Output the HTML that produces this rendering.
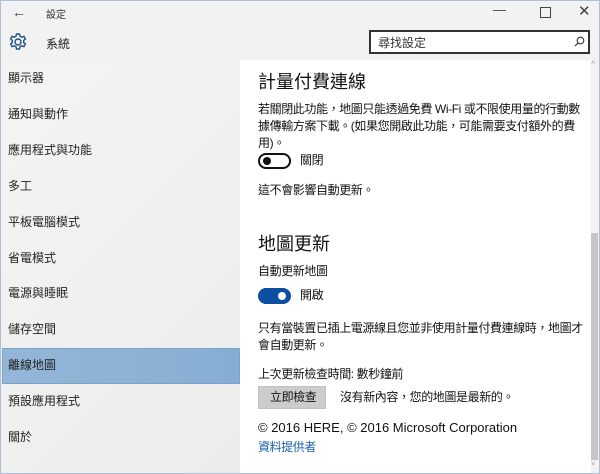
<!DOCTYPE html>
<html><head><meta charset="utf-8"><style>
*{margin:0;padding:0;box-sizing:border-box}
body{width:600px;height:474px;overflow:hidden;background:#f2f2f2;font-family:"Liberation Sans","Noto Sans CJK TC",sans-serif;color:#000;position:relative}
.abs{position:absolute;white-space:nowrap}
#frame{position:absolute;left:0;top:0;width:600px;height:474px;border:1px solid #a9c0d8;pointer-events:none}
#side{position:absolute;left:1px;top:60px;width:239px;height:413px;background:linear-gradient(135deg,#f4f4f4,#ececec)}
.it{position:absolute;left:8px;font-size:12px;color:#222;line-height:14px}
#sel{position:absolute;left:2px;top:348px;width:238px;height:36px;background:linear-gradient(90deg,#94b6d8,#86aed3);border:1px solid #7aa3cc}
#content{position:absolute;left:240px;top:60px;width:359px;height:413px;background:#fff}
.t{font-size:12px;letter-spacing:-0.4px;color:#111;line-height:17px}
.h{font-size:18px;color:#111}
</style></head><body>
<div class="abs" style="left:12px;top:4px;font-size:14px;color:#333">&#8592;</div>
<div class="abs" style="left:46px;top:6px;font-size:10px;color:#333">設定</div>
<div class="abs" style="left:493px;top:2px;font-size:13px;color:#444">&#8212;</div>
<div class="abs" style="left:540px;top:7px;width:11px;height:11px;border:1px solid #444"></div>
<div class="abs" style="left:578px;top:2px;font-size:15px;color:#444">&#10005;</div>
<svg class="abs" style="left:8px;top:32px" width="20" height="20" viewBox="0 0 20 20"><g fill="none" stroke="#1c4f8a" stroke-width="1.4"><circle cx="10" cy="10" r="3"/><path d="M8.5 2h3l.5 2.2 1.8 1 2.1-.8 1.5 2.6-1.7 1.5v2l1.7 1.5-1.5 2.6-2.1-.8-1.8 1-.5 2.2h-3l-.5-2.2-1.8-1-2.1.8-1.5-2.6 1.7-1.5v-2L2.6 7l1.5-2.6 2.1.8 1.8-1z"/></g></svg>
<div class="abs" style="left:46px;top:35px;font-size:12px;color:#222">系統</div>
<div class="abs" style="left:369px;top:30px;width:221px;height:24px;border:2px solid #333;background:#fff"></div>
<div class="abs" style="left:378px;top:34px;font-size:12px;color:#333">尋找設定</div>
<svg class="abs" style="left:574px;top:36px" width="11" height="11" viewBox="0 0 11 11"><circle cx="6.5" cy="4.5" r="3.3" fill="none" stroke="#333" stroke-width="1.1"/><path d="M4.2 6.8 1 10" stroke="#333" stroke-width="1.2"/></svg>
<div id="side"></div>
<div id="sel"></div>
<div class="it" style="top:71px">顯示器</div>
<div class="it" style="top:107px">通知與動作</div>
<div class="it" style="top:143px">應用程式與功能</div>
<div class="it" style="top:179px">多工</div>
<div class="it" style="top:215px">平板電腦模式</div>
<div class="it" style="top:251px">省電模式</div>
<div class="it" style="top:286px">電源與睡眠</div>
<div class="it" style="top:322px">儲存空間</div>
<div class="it" style="top:358px">離線地圖</div>
<div class="it" style="top:394px">預設應用程式</div>
<div class="it" style="top:430px">關於</div>
<div id="content"></div>
<div class="abs" style="left:591px;top:60px;width:8px;height:413px;background:#f2f2f2"></div>
<div class="abs" style="left:591px;top:233px;width:7px;height:227px;background:#c6c6c6"></div>
<div class="abs" style="left:591px;top:60px;font-size:7px;color:#999">&#708;</div>
<div class="abs" style="left:591px;top:461px;font-size:7px;color:#999">&#709;</div>
<div class="abs h" style="left:258px;top:68px">計量付費連線</div>
<div class="abs t" style="left:258px;top:101px">若關閉此功能，地圖只能透過免費 Wi-Fi 或不限使用量的行動數<br>據傳輸方案下載。(如果您開啟此功能，可能需要支付額外的費<br>用)。</div>
<div class="abs" style="left:258px;top:153px;width:33px;height:16px;border:2px solid #111;border-radius:8px"></div>
<div class="abs" style="left:263px;top:157px;width:8px;height:8px;border-radius:50%;background:#111"></div>
<div class="abs t" style="left:300px;top:152px">關閉</div>
<div class="abs t" style="left:258px;top:182px">這不會影響自動更新。</div>
<div class="abs h" style="left:258px;top:230px">地圖更新</div>
<div class="abs t" style="left:258px;top:263px">自動更新地圖</div>
<div class="abs" style="left:258px;top:288px;width:33px;height:16px;background:#0b4ea2;border-radius:8px"></div>
<div class="abs" style="left:278px;top:292px;width:8px;height:8px;border-radius:50%;background:#fff"></div>
<div class="abs t" style="left:300px;top:287px">開啟</div>
<div class="abs t" style="left:258px;top:320px">只有當裝置已插上電源線且您並非使用計量付費連線時，地圖才<br>會自動更新。</div>
<div class="abs t" style="left:258px;top:366px">上次更新檢查時間: 數秒鐘前</div>
<div class="abs" style="left:258px;top:386px;width:68px;height:23px;background:#ccc;border:1px solid #c0c0c0"></div>
<div class="abs t" style="left:270px;top:389px">立即檢查</div>
<div class="abs t" style="left:340px;top:389px">沒有新內容，您的地圖是最新的。</div>
<div class="abs t" style="left:258px;top:419px;font-size:13px;letter-spacing:0">© 2016 HERE, © 2016 Microsoft Corporation</div>
<div class="abs t" style="left:258px;top:439px;color:#1a5fa8">資料提供者</div>
<div id="frame"></div>
</body></html>
